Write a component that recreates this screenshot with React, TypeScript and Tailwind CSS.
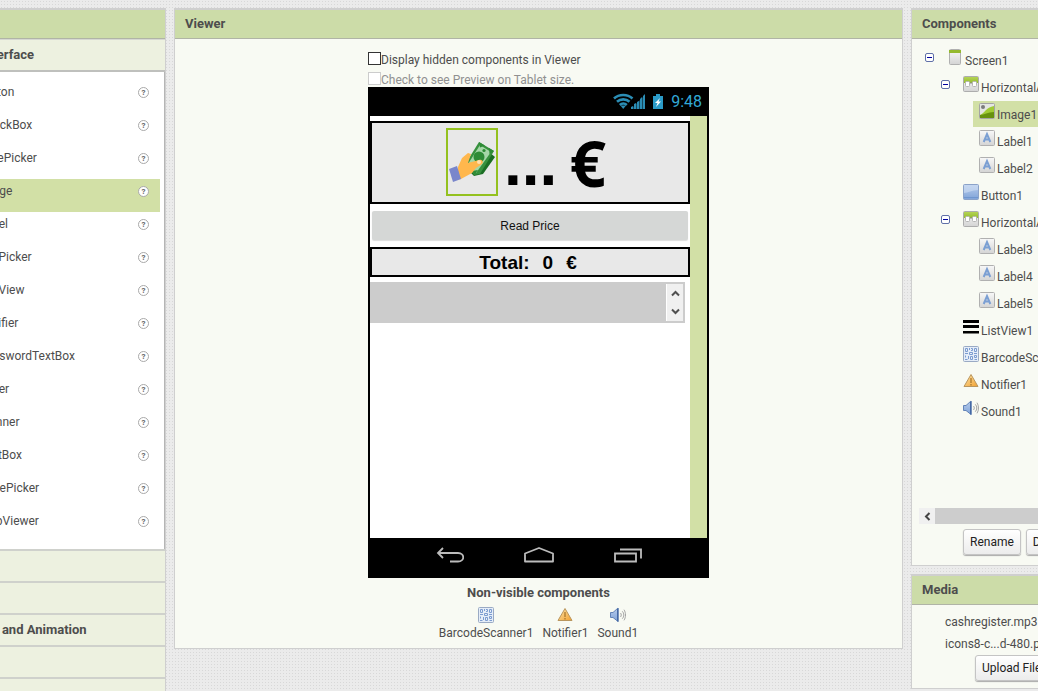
import type { ReactNode } from "react";

const paletteItems = [
  "Button", "CheckBox", "DatePicker", "Image", "Label", "ListPicker", "ListView",
  "Notifier", "PasswordTextBox", "Slider", "Spinner", "TextBox", "TimePicker", "WebViewer",
];

const drawers = ["Layout", "Media", "Drawing and Animation", "Maps", "Sensors"];

type Kind = "screen" | "arrangement" | "image" | "label" | "button" | "list" | "barcode" | "notifier" | "sound";

const tree: { name: string; kind: Kind; depth: number; open?: boolean; selected?: boolean }[] = [
  { name: "Screen1", kind: "screen", depth: 0, open: true },
  { name: "HorizontalArrangement1", kind: "arrangement", depth: 1, open: true },
  { name: "Image1", kind: "image", depth: 2, selected: true },
  { name: "Label1", kind: "label", depth: 2 },
  { name: "Label2", kind: "label", depth: 2 },
  { name: "Button1", kind: "button", depth: 1 },
  { name: "HorizontalArrangement2", kind: "arrangement", depth: 1, open: true },
  { name: "Label3", kind: "label", depth: 2 },
  { name: "Label4", kind: "label", depth: 2 },
  { name: "Label5", kind: "label", depth: 2 },
  { name: "ListView1", kind: "list", depth: 1 },
  { name: "BarcodeScanner1", kind: "barcode", depth: 1 },
  { name: "Notifier1", kind: "notifier", depth: 1 },
  { name: "Sound1", kind: "sound", depth: 1 },
];

const indents = ["pl-[5px]", "pl-[21px]", "pl-[37px]"];

function ComponentIcon({ kind }: { kind: Kind }) {
  return (
    <svg width="16" height="16" viewBox="0 0 16 16" className="shrink-0" aria-hidden="true">
      <defs>
        <linearGradient id="grey" x1="0" y1="0" x2="0" y2="1">
          <stop offset="0" stopColor="#f8f8f8" />
          <stop offset="1" stopColor="#d4d4d4" />
        </linearGradient>
        <linearGradient id="blue" x1="0" y1="0" x2="0" y2="1">
          <stop offset="0" stopColor="#b9cdec" />
          <stop offset="1" stopColor="#7fa3d8" />
        </linearGradient>
        <linearGradient id="green" x1="0" y1="0" x2="0" y2="1">
          <stop offset="0" stopColor="#b4d356" />
          <stop offset="1" stopColor="#95bd2c" />
        </linearGradient>
        <linearGradient id="amber" x1="0" y1="0" x2="1" y2="1">
          <stop offset="0" stopColor="#ffe4a8" />
          <stop offset="1" stopColor="#f0a030" />
        </linearGradient>
      </defs>
      {kind === "screen" && (
        <>
          <rect x="2.5" y=".5" width="11" height="15" rx="1" fill="url(#grey)" stroke="#b0b0b0" />
          <path d="M2 1h12v3H2z" fill="#94b92e" />
        </>
      )}
      {kind === "arrangement" && (
        <>
          <rect x=".5" y=".5" width="15" height="15" rx="1" fill="url(#grey)" stroke="#adadad" />
          <path d="M1 1h14v6H1z" fill="url(#green)" />
          <rect x="2.5" y="5.5" width="4" height="5" rx="1" fill="#fff" stroke="#b4b4b4" />
          <rect x="9.5" y="5.5" width="4" height="5" rx="1" fill="#fff" stroke="#b4b4b4" />
          <path d="M7 7h2" stroke="#888" />
        </>
      )}
      {kind === "image" && (
        <>
          <rect x=".5" y=".5" width="15" height="15" rx="1" fill="#e4e6e2" stroke="#a4a4a4" />
          <path d="M1 12C5 11 7 4 15 3v12H1z" fill="#a0cb35" />
          <path d="M1 12c4 0 8-3 14-3v6H1z" fill="#67920f" />
          <circle cx="4" cy="4" r="2" fill="#7b7b7b" />
        </>
      )}
      {kind === "label" && (
        <>
          <rect x=".5" y=".5" width="15" height="15" rx="1" fill="url(#grey)" stroke="#b0b0b0" />
          <path d="M4.7 12 8 4 11.300 12M6 9.500h4" fill="none" stroke="#7b9fd3" strokeWidth="2" />
        </>
      )}
      {kind === "button" && (
        <>
          <rect x=".5" y=".5" width="15" height="15" rx="1" fill="url(#blue)" stroke="#8ba2c8" />
          <path d="M1 1h14v5C9 6 5 9 1 9z" fill="#cfdef3" opacity=".6" />
          <path d="M1 13.500h14" stroke="#6f96cf" />
        </>
      )}
      {kind === "list" && <path d="M0 1h16v3H0zM0 6h16v3H0zM0 12h16v2.500H0z" fill="#000" />}
      {kind === "barcode" && (
        <>
          <rect x=".5" y=".5" width="15" height="15" rx="1" fill="#e5edf8" stroke="#9aaac4" />
          <path
            d="M2.500 2.500h2v3h-2zM6.500 2v2M8 2.500h1.500v2H8M11.500 2.500h2v3h-2zM2 7.500h3M6.500 6.500h3v2h-3zM11 7.500h3M2.500 9.500v2M2 13.500h2.500M5.500 10v3M7.500 10.500h2v3h-2zM11.500 9.500h2v2h-2zM11.500 13.500H14"
            fill="none" stroke="#7c9cd0"
          />
        </>
      )}
      {kind === "notifier" && (
        <>
          <path d="M8 1.500 1 13.500h14z" fill="url(#amber)" stroke="#b9965e" strokeLinejoin="round" />
          <path d="M8 5v5M8 11v1.500" stroke="#a5752c" strokeWidth="1.200" />
        </>
      )}
      {kind === "sound" && (
        <>
          <path d="M.5 5.500H3L8 1v13.500L3 10.500H.5z" fill="url(#blue)" stroke="#6484b8" />
          <path d="M7 2v12l1.500 1V1z" fill="#4468a4" />
          <path
            d="M10.500 6c1 1.200 1 2.800 0 4M12.300 4.300c2 2.200 2 5.200 0 7.400M14 2.700c2 3 2 7.600 0 10.600"
            fill="none" stroke="#a4a4a4"
          />
        </>
      )}
    </svg>
  );
}

function Panel({ title, children, className = "" }: { title: string; children: ReactNode; className?: string }) {
  return (
    <section className={`border border-t-2 border-[#cfcfcf] bg-[#f8faf3] ${className}`}>
      <h2 className="h-[29px] border-b border-[#b0b4a6] bg-[#ccdca8] pl-2.5 text-[13px] leading-7 font-bold">
        {title}
      </h2>
      {children}
    </section>
  );
}

function PushButton({ children }: { children: ReactNode }) {
  return (
    <button
      type="button"
      className="h-[26px] shrink-0 rounded-[3px] border border-[#c4c4c4] bg-linear-to-b from-white to-[#ececec] px-1.5 text-[12px] whitespace-nowrap text-[#222] shadow-[0_1px_1px_#aaa]"
    >
      {children}
    </button>
  );
}

function Palette() {
  return (
    <aside className="w-[226px] shrink-0 border border-t-2 border-[#cfcfcf] bg-[#edf1e0]">
      <h2 className="h-[29px] border-b border-[#b0b4a6] bg-[#ccdca8] pl-2.5 text-[13px] leading-7 font-bold">Palette</h2>
      <button
        type="button"
        className="block h-[33px] w-full border-t border-b-2 border-t-[#d6d8d2] border-b-[#bfc0bd] pl-2.5 text-left text-[13px] font-bold"
      >
        User Interface
      </button>
      <ul className="border-r border-[#b5b5b5] bg-white pt-2 pr-1 pb-[7px]">
        {paletteItems.map((item) => (
          <li
            key={item}
            className={`flex h-[33px] items-start justify-between pt-1 pr-[11px] pl-[38px] leading-4 ${item === "Image" ? "bg-[#d2e0a6]" : ""}`}
          >
            <span>{item}</span>
            <button
              type="button"
              aria-label={`About ${item}`}
              className="mt-[3px] h-[11px] w-[11px] rounded-full border border-[#a9a9a9] bg-white text-center text-[8px] leading-[9px] font-bold text-[#666]"
            >
              ?
            </button>
          </li>
        ))}
      </ul>
      {drawers.map((drawer) => (
        <button
          key={drawer}
          type="button"
          className="block h-8 w-full border-t-2 border-[#cfd1cc] pl-2.5 text-left text-[13px] font-bold"
        >
          {drawer}
        </button>
      ))}
    </aside>
  );
}

function StatusBar() {
  return (
    <div className="flex h-[29px] items-center justify-end bg-black pr-[7px] text-[#33a9d6]">
      <svg width="52" height="17" viewBox="0 0 52 17" aria-hidden="true">
        <g fill="none" stroke="#2b8db5" strokeWidth="2.600">
          <path d="M1 5.500c5-4.700 13.500-4.700 18.500 0M4 8.800c3.500-3.300 9-3.300 12.500 0M6.800 12c2-1.800 5-1.800 7 0" />
        </g>
        <path d="M7.500 12.500h5.500L10.200 16z" fill="#2b8db5" />
        <path d="M18 16v-2l2-1v3zM21 16v-5l2-1v6zM24 16V9l2-1v8zM27 16V6l2-2v12zM30 16V3l2-2v15z" fill="#2b8db5" />
        <path d="M18 16 32 2v14z" fill="#2b8db5" opacity=".5" />
        <path d="M40 3h3V1h4v2h3v13H40z" fill="#2b9bc8" />
        <path d="m47 5-5 5h2.500L43 14l5-5.500h-2.500z" fill="#fff" />
      </svg>
      <span className="ml-1.5 text-[16px]">9:48</span>
    </div>
  );
}

function MoneyHand() {
  return (
    <svg width="48" height="48" viewBox="0 0 48 48" role="img" aria-label="Hand holding banknotes">
      <path d="m34 8 13 11-12 17-9 2-4-4z" fill="#1b6e24" />
      <path d="m31 4 15 9-14 23-6 1-8-12z" fill="#37913e" />
      <path d="m32 7 11 7-15 21-8-9z" fill="#a5d6a7" />
      <path d="m31 4 6 3.500-5 2zM46 13l-5-3 .5 6zM24 33l6-1-3 4z" fill="#2e8b36" />
      <circle cx="31" cy="19" r="5.500" fill="#2e8b36" />
      <circle cx="36" cy="12.500" r="1.600" fill="#2e8b36" />
      <path d="m10 29 4-9 6-5 3 1-3 9 11-3c3-1 5 2 3 4l-6 4-4 5-11 6-4 1z" fill="#ffb74d" />
      <circle cx="31" cy="24" r="2" fill="#ffe0b2" />
      <path d="m1 31 8-3 4 13-8 3z" fill="#7986cb" />
    </svg>
  );
}

function Phone() {
  return (
    <div className="bg-black">
      <StatusBar />
      <div className="mx-0.5 flex h-[422px] bg-white pt-[5px] text-black">
        <div className="min-w-0 flex-1 font-['Liberation_Sans',sans-serif]">
          <div className="flex h-[83px] items-center justify-center border-2 border-black bg-[#e8e8e8] pr-2 text-[64px] leading-none font-bold">
            <div className="mb-0.5 flex h-[68px] w-[52px] shrink-0 items-center justify-center border-2 border-[#94c11f]">
              <MoneyHand />
            </div>
            <span className="ml-1.5">...</span>
            <span className="ml-3 font-['Open_Sans',sans-serif]">€</span>
          </div>
          <button
            type="button"
            className="mx-0.5 mt-[7px] block h-[29px] w-[316px] rounded-[2px] bg-[#d5d7d6] text-[12px] text-[#111] shadow-[0_1px_1px_#ddd]"
          >
            Read Price
          </button>
          <div className="mt-[7px] flex h-[30px] items-center justify-center gap-[13px] border-2 border-black bg-[#e8e8e8] pr-1 text-[19px] leading-none font-bold">
            <span>Total:</span>
            <span>0</span>
            <span>€</span>
          </div>
          <div className="mt-[5px] mr-[5px] flex h-[41px] justify-end bg-[#ccc] py-0.5 pr-0.5">
            <div className="flex w-[17px] flex-col items-center justify-between border-l border-white bg-[#f0f0f0] py-1.5">
              <svg width="9" height="7" viewBox="0 0 9 7" aria-hidden="true">
                <path d="M1 5.500 4.500 2 8 5.500" fill="none" stroke="#505050" strokeWidth="2" />
              </svg>
              <svg width="9" height="7" viewBox="0 0 9 7" aria-hidden="true">
                <path d="M1 1.500 4.500 5 8 1.500" fill="none" stroke="#505050" strokeWidth="2" />
              </svg>
            </div>
          </div>
        </div>
        <div className="-mt-[5px] w-[17px] bg-[#d2e0a6]" />
      </div>
      <div className="flex h-10 items-start justify-center gap-[60px] pt-2">
        <svg width="28" height="18" viewBox="0 0 28 18" fill="none" stroke="#bcbcbc" strokeWidth="1.800" aria-hidden="true">
          <path d="M7 2 2 7l5 5M2 7h20c7 0 7 8.500 0 8.500h-8" />
        </svg>
        <svg width="30" height="18" viewBox="0 0 30 18" fill="none" stroke="#bcbcbc" strokeWidth="1.800" aria-hidden="true">
          <path d="M1 7.500 15 2l14 5.500V15.500H1z" strokeLinejoin="round" />
        </svg>
        <svg width="28" height="18" viewBox="0 0 28 18" fill="none" stroke="#bcbcbc" strokeWidth="1.800" aria-hidden="true">
          <path d="M1 7.500h21v8H1zM6 3.500h21v9" />
        </svg>
      </div>
    </div>
  );
}

function Viewer() {
  return (
    <Panel title="Viewer" className="h-[641px] min-w-0 flex-1">
      <div className="mx-auto w-[341px] pt-[11px]">
        <label className="flex h-5 items-center">
          <input type="checkbox" className="mb-1 h-[13px] w-[13px] appearance-none border border-[#333] bg-white" />
          Display hidden components in Viewer
        </label>
        <label className="flex h-5 items-center text-[#909090]">
          <input
            type="checkbox"
            disabled
            className="mb-1 h-[13px] w-[13px] appearance-none border border-[#ccc] bg-white"
          />
          Check to see Preview on Tablet size.
        </label>
        <div className="-mt-[3px]">
          <Phone />
        </div>
        <div className="mt-1.5 text-center text-[13px] font-bold">Non-visible components</div>
        <div className="mt-[5px] flex justify-center gap-[9px]">
          {tree.slice(-3).map((item) => (
            <div key={item.name} className="flex flex-col items-center">
              <ComponentIcon kind={item.kind} />
              <span className="pt-px">{item.name}</span>
            </div>
          ))}
        </div>
      </div>
    </Panel>
  );
}

function Components() {
  return (
    <Panel title="Components" className="h-[558px]">
      <ul className="h-[469px] overflow-hidden pt-2 pl-2">
        {tree.map((item) => (
          <li key={item.name} className={`flex h-[27px] ${indents[item.depth]}`}>
            <div className="flex w-4 shrink-0 items-start pt-1.5">
              {item.open && (
                <button
                  type="button"
                  aria-label={`Collapse ${item.name}`}
                  className="flex h-[9px] w-[9px] items-center justify-center rounded-[2px] border border-[#6070a8] bg-white"
                >
                  <span className="h-px w-[5px] bg-[#0000a0]" />
                </button>
              )}
            </div>
            <div className={`flex h-[26px] flex-1 items-start pl-1.5 ${item.selected ? "bg-[#d2e0a6]" : ""}`}>
              <div className="pt-0.5">
                <ComponentIcon kind={item.kind} />
              </div>
              <span className="pt-[5px] pl-0.5 leading-[18px]">{item.name}</span>
            </div>
          </li>
        ))}
      </ul>
      <div className="ml-[7px] flex h-4 bg-[#cdcdcd]">
        <div className="flex w-4 items-center justify-center bg-[#f0f0f0]">
          <svg width="7" height="9" viewBox="0 0 7 9" aria-hidden="true">
            <path d="M5.500 1 2 4.500 5.500 8" fill="none" stroke="#444" strokeWidth="2" />
          </svg>
        </div>
      </div>
      <div className="flex gap-[5px] pt-[5px] pl-[51px]">
        <PushButton>Rename</PushButton>
        <PushButton>Delete</PushButton>
      </div>
    </Panel>
  );
}

export default function App() {
  return (
    <main className="h-screen overflow-hidden bg-[#ebebeb] bg-[radial-gradient(#d8d8d8_1px,transparent_1px)] bg-size-[3px_3px] font-[Roboto,sans-serif] text-[12px] leading-[18px] text-[#4d4d4d]">
      <div className="-mr-[93px] -ml-[60px] flex items-start gap-2 pt-2">
        <Palette />
        <Viewer />
        <div className="flex w-[220px] shrink-0 flex-col gap-2">
          <Components />
          <Panel title="Media" className="h-[115px]">
            <ul className="pt-1.5 pl-[33px] leading-[22px]">
              <li>cashregister.mp3</li>
              <li>icons8-c...d-480.png</li>
            </ul>
            <div className="pl-[63px]">
              <PushButton>Upload File ...</PushButton>
            </div>
          </Panel>
        </div>
      </div>
    </main>
  );
}
